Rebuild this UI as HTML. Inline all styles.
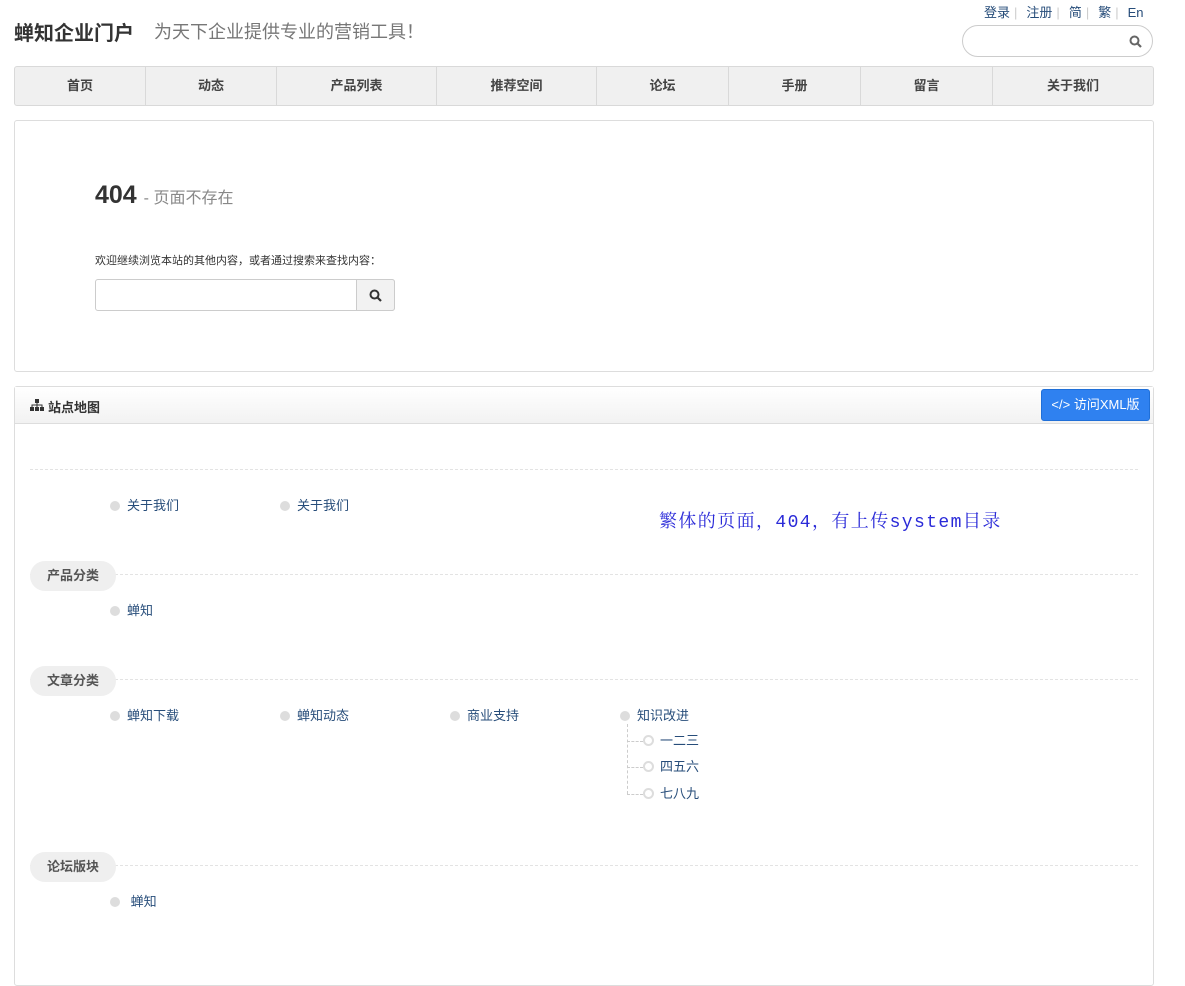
<!DOCTYPE html>
<html><head><meta charset="utf-8"><style>
*{margin:0;padding:0;box-sizing:border-box}
body{width:1185px;height:915px;overflow:hidden;background:#fff;font-family:"Liberation Sans","Noto Sans CJK SC",sans-serif;font-size:13px;color:#333;position:relative}
.a{position:absolute;white-space:nowrap}
.nav{position:absolute;left:14px;top:66px;width:1140px;height:40px;background:#f0f0f0;border:1px solid #d9d9d9;border-radius:3px}
.nav div{position:absolute;top:0;height:38px;line-height:38px;text-align:center;font-weight:bold;font-size:13px;color:#444;border-right:1px solid #d9d9d9}
.box{position:absolute;border:1px solid #ddd;border-radius:3px;background:#fff}
.dash{position:absolute;left:30px;width:1108px;border-top:1px dashed #e3e3e3}
.pill{position:absolute;left:30px;width:86px;height:30px;line-height:30px;text-align:center;background:#efefef;border-radius:15px;font-weight:bold;color:#555;font-size:13px}
.it{position:absolute;font-size:13px;color:#274d7a;padding-left:17px;line-height:16px}
.it:before{content:"";position:absolute;left:0;top:3px;width:10px;height:10px;border-radius:50%;background:#ddd}
.sub{position:absolute;font-size:13px;color:#274d7a;padding-left:17px;line-height:16px}
.sub:before{content:"";position:absolute;left:0;top:2px;border-radius:50%;border:2px solid #ddd;box-sizing:border-box;width:11px;height:11px}
.tl span{color:#ccc;margin:0 9px 0 4px}
</style></head><body>
<div class="a" style="left:14px;top:17px;font-size:20px;font-weight:bold;color:#333">蝉知企业门户</div>
<div class="a" style="left:154px;top:18px;font-size:18px;color:#777">为天下企业提供专业的营销工具！</div>
<div class="a tl" style="left:984px;top:2px;font-size:13px;color:#274d7a">登录<span>|</span>注册<span>|</span>简<span>|</span>繁<span>|</span>En</div>
<div class="a" style="left:962px;top:25px;width:191px;height:32px;border:1px solid #ccc;border-radius:16px"></div>
<svg class="a" style="left:1129px;top:35px" width="13" height="13" viewBox="0 0 13 13"><circle cx="5.5" cy="5.5" r="4" fill="none" stroke="#666" stroke-width="2"/><path d="M8.5 8.5L12 12" stroke="#666" stroke-width="2.2"/></svg>
<div class="nav">
<div style="left:0;width:131px">首页</div><div style="left:131px;width:131px">动态</div><div style="left:262px;width:160px">产品列表</div><div style="left:422px;width:160px">推荐空间</div><div style="left:582px;width:132px">论坛</div><div style="left:714px;width:132px">手册</div><div style="left:846px;width:132px">留言</div><div style="left:978px;width:160px;border:none">关于我们</div>
</div>
<div class="box" style="left:14px;top:120px;width:1140px;height:252px"></div>
<div class="a" style="left:95px;top:181px;font-size:25px;font-weight:bold;color:#333">404 <span style="font-size:16px;font-weight:normal;color:#888">- 页面不存在</span></div>
<div class="a" style="left:95px;top:252px;font-size:11px;color:#333">欢迎继续浏览本站的其他内容，或者通过搜索来查找内容：</div>
<div class="a" style="left:95px;top:279px;width:300px;height:32px;border:1px solid #ccc;border-radius:3px"></div>
<div class="a" style="left:356px;top:279px;width:39px;height:32px;border:1px solid #ccc;background:#f2f2f2;border-radius:0 3px 3px 0"></div>
<svg class="a" style="left:369px;top:289px" width="13" height="13" viewBox="0 0 13 13"><circle cx="5.5" cy="5.5" r="4" fill="none" stroke="#333" stroke-width="2"/><path d="M8.5 8.5L12 12" stroke="#333" stroke-width="2.2"/></svg>
<div class="box" style="left:14px;top:386px;width:1140px;height:600px"></div>
<div class="a" style="left:15px;top:387px;width:1138px;height:37px;background:linear-gradient(#fff,#f2f2f2);border-bottom:1px solid #ddd"></div>
<svg class="a" style="left:30px;top:399px" width="14" height="12" viewBox="0 0 14 12"><rect x="5" y="0" width="4" height="4" fill="#333"/><rect x="0" y="8" width="4" height="4" fill="#333"/><rect x="5" y="8" width="4" height="4" fill="#333"/><rect x="10" y="8" width="4" height="4" fill="#333"/><path d="M7 4v4M2 8V6h10v2" stroke="#333" fill="none"/></svg>
<div class="a" style="left:48px;top:397px;font-weight:bold;font-size:13px;color:#333">站点地图</div>
<div class="a" style="left:1041px;top:389px;width:109px;height:32px;background:#2f81f0;border:1px solid #1f6fd8;border-radius:3px;color:#fff;font-size:13px;line-height:30px;text-align:center">&lt;/&gt; 访问XML版</div>
<div class="dash" style="top:469px"></div>
<div class="it" style="left:110px;top:498px">关于我们</div>
<div class="it" style="left:280px;top:498px">关于我们</div>
<div class="a" style="left:659px;top:507px;font-family:'Liberation Mono','Noto Serif CJK SC',monospace;font-size:18px;letter-spacing:1.4px;color:#2a2ad8">繁体的页面，404，有上传system目录</div>
<div class="dash" style="top:574px"></div>
<div class="pill" style="top:561px">产品分类</div>
<div class="it" style="left:110px;top:603px">蝉知</div>
<div class="dash" style="top:679px"></div>
<div class="pill" style="top:666px">文章分类</div>
<div class="it" style="left:110px;top:708px">蝉知下载</div>
<div class="it" style="left:280px;top:708px">蝉知动态</div>
<div class="it" style="left:450px;top:708px">商业支持</div>
<div class="it" style="left:620px;top:708px">知识改进</div>
<div class="a" style="left:627px;top:724px;width:1px;height:70px;border-left:1px dashed #ccc"></div>
<div class="a" style="left:627px;top:741px;width:16px;border-top:1px dashed #ccc"></div>
<div class="a" style="left:627px;top:767px;width:16px;border-top:1px dashed #ccc"></div>
<div class="a" style="left:627px;top:794px;width:16px;border-top:1px dashed #ccc"></div>
<div class="sub" style="left:643px;top:733px">一二三</div>
<div class="sub" style="left:643px;top:759px">四五六</div>
<div class="sub" style="left:643px;top:786px">七八九</div>
<div class="dash" style="top:865px"></div>
<div class="pill" style="top:852px">论坛版块</div>
<div class="it" style="left:110px;top:894px">&nbsp;蝉知</div>
</body></html>
